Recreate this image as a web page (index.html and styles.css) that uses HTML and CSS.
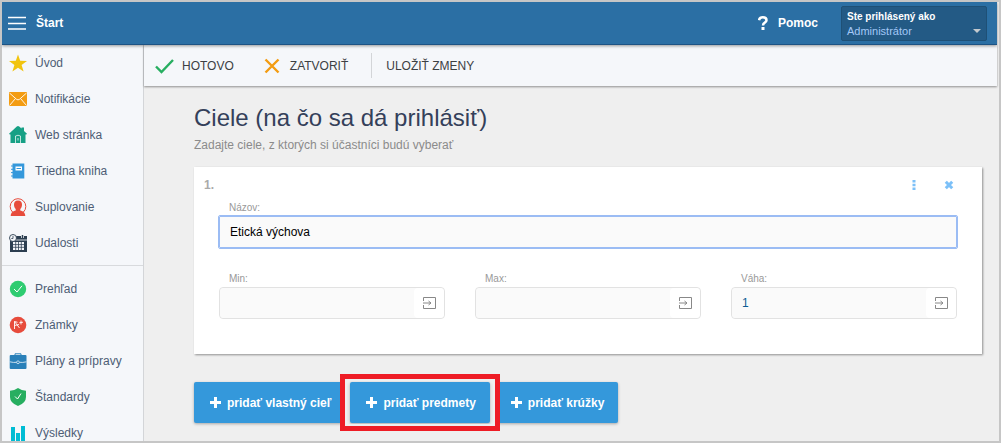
FILE: index.html
```html
<!DOCTYPE html>
<html lang="sk">
  <head>
    <meta charset="utf-8">
    <title>Ciele</title>
    <meta name="viewport" content="width=device-width, initial-scale=1">
    <link rel="stylesheet" href="styles.css">
  </head>
  <body>
    <header class="topbar">
      <button type="button" class="menu-button">
        <svg width="18" height="14" viewBox="0 0 18 14" fill="none" stroke="#fff" stroke-width="1.600"><path d="M0 1.500h18M0 7.500h18M0 13h18"/></svg>
        Štart
      </button>
      <a href="#" class="help">
        <svg width="10" height="14" viewBox="0 0 10 14" fill="none" stroke="#fff" stroke-width="2.500"><path d="M1 4.200C1.300 2.200 2.800 1.300 4.800 1.300c2.200 0 3.700 1.200 3.700 2.900C8.500 6.500 5 6.400 5 9.400"/><path d="M5 11v3" stroke-width="3"/></svg>
        Pomoc
      </a>
      <button type="button" class="user">
        <span class="user-label">Ste prihlásený ako</span>
        <span class="user-name">Administrátor <i class="caret"></i></span>
      </button>
    </header>

    <div class="layout">
      <nav class="sidebar">
        <ul>
          <li><a href="#">
            <svg width="18" height="18" viewBox="0 0 18 18" fill="#f1c40f"><path d="M9 .5l2.200 6.200 6.800.2-5.400 4.200 2 6.400L9 13.700l-5.600 3.800 2-6.400L0 6.900l6.800-.2z"/></svg>
            Úvod</a></li>
          <li><a href="#">
            <svg width="18" height="18" viewBox="0 0 18 18"><path d="M0 2h18v14H0z" fill="#f39c12"/><path d="M.5 3l7 6.300q1.500 1.200 3 0l7-6.300M.5 15.500l5.800-6.800M17.500 15.500l-5.800-6.800" fill="none" stroke="#fff" stroke-width=".9"/></svg>
            Notifikácie</a></li>
          <li><a href="#">
            <svg width="18" height="18" viewBox="0 0 18 18"><path d="M0 7.700L7.800.6q1.200-1 2.400 0L12.500 2.600V1.500H15v3.400l3 2.800-.7.900H16.500V17H1.500V8.600H.8z" fill="#16a085"/><path d="M6.500 17V10q2.500-1.500 5 0v7M9 12v2.500" fill="none" stroke="#e7f5f2" stroke-width=".8"/></svg>
            Web stránka</a></li>
          <li><a href="#">
            <svg width="18" height="18" viewBox="0 0 18 18"><path d="M3.500 1.500h11.800v15H3.500z" fill="#3498db"/><path d="M2 4h2M2 7.300h2M2 10.600h2M2 14h2" stroke="#3498db"/><path d="M6.500 4.500h6.500v4H6.500z" fill="#fff"/><path d="M7.500 6.500h4.500" stroke="#3498db"/></svg>
            Triedna kniha</a></li>
          <li><a href="#">
            <svg width="18" height="18" viewBox="0 0 18 18"><circle cx="9" cy="8.500" r="7.800" fill="none" stroke="#e74c3c"/><path d="M9 2.500c3 0 4 1.800 4 4.300 0 2-.8 3.200-1.700 4.200v1.500c2.200.8 4.700 1.300 5 5.500H1.700c.3-4.200 2.800-4.700 5-5.500V11C5.800 10 5 8.800 5 6.800c0-2.500 1-4.300 4-4.300z" fill="#e74c3c"/></svg>
            Suplovanie</a></li>
          <li><a href="#">
            <svg width="18" height="18" viewBox="0 0 18 18"><path d="M1 2h17v16H1z" fill="#2c3e50"/><path d="M1 6h17" stroke="#f5f7fa" stroke-width=".8"/><path d="M13.500 0v4" stroke="#f5f7fa" stroke-width="3"/><path d="M13.500 1v3" stroke="#2c3e50" stroke-width="1.500"/><path d="M4 8h11v8H4z" fill="#f5f7fa"/><path d="M6.700 8v8M9.500 8v8M12.300 8v8M4 10.600h11M4 13.300h11" stroke="#2c3e50" stroke-width=".8"/><circle cx="4" cy="4" r="3.500" fill="#f5f7fa" stroke="#2c3e50" stroke-width=".9"/><path d="M4 2v2.500H2.300" fill="none" stroke="#2c3e50" stroke-width=".8"/></svg>
            Udalosti</a></li>
        </ul>
        <ul>
          <li><a href="#">
            <svg width="18" height="18" viewBox="0 0 18 18"><circle cx="9" cy="9" r="8.200" fill="#2ecc71"/><path d="M5 9l3 3 5-6.200" fill="none" stroke="#fff"/></svg>
            Prehľad</a></li>
          <li><a href="#">
            <svg width="18" height="18" viewBox="0 0 18 18"><circle cx="9" cy="9" r="8.300" fill="#e74c3c"/><path d="M5.500 13V5.500l5 6.500M5.500 9.500l4.500-1M5.500 5.500l3 .8M12 4.500v4M10.300 6.800l3.700-.6" fill="none" stroke="#fff" stroke-width=".9"/></svg>
            Známky</a></li>
          <li><a href="#">
            <svg width="18" height="18" viewBox="0 0 18 18"><path d="M6 3.500V1.800h6v1.700" fill="none" stroke="#2980b9"/><rect x=".7" y="3" width="16.800" height="14" rx="1" fill="#2980b9"/><path d="M.7 9.800q4 1 7 .5M17.500 9.800q-4 1-7 .5" fill="none" stroke="#d7e8f4" stroke-width=".9"/><circle cx="9" cy="10.300" r="1.400" fill="none" stroke="#d7e8f4" stroke-width=".8"/></svg>
            Plány a prípravy</a></li>
          <li><a href="#">
            <svg width="18" height="18" viewBox="0 0 18 18"><path d="M9 0q3.500 2.500 8 2.700V9q0 6-8 9-8-3-8-9V2.700Q5.500 2.500 9 0z" fill="#27ae60"/><path d="M6 8.500l2.500 2.500L12 5.500" fill="none" stroke="#fff"/></svg>
            Štandardy</a></li>
          <li><a href="#">
            <svg width="18" height="18" viewBox="0 0 18 18" fill="#00bcd4"><path d="M2 3h4v15H2zM7 9h4v9H7zM12 2h4v16h-4z"/></svg>
            Výsledky</a></li>
        </ul>
      </nav>

      <main class="main">
        <div class="toolbar">
          <button type="button">
            <svg width="19" height="16" viewBox="0 0 19 16" fill="none" stroke="#27ae60" stroke-width="2.400"><path d="M1 8.500l5.500 5.500L18 2"/></svg>
            HOTOVO
          </button>
          <button type="button">
            <svg width="18" height="16" viewBox="0 0 18 16" fill="none" stroke="#f39c12" stroke-width="2.400"><path d="M1.500 1.500l13 13M14.500 1.500l-13 13"/></svg>
            ZATVORIŤ
          </button>
          <button type="button" class="save">ULOŽIŤ ZMENY</button>
        </div>

        <div class="content">
          <h1>Ciele (na čo sa dá prihlásiť)</h1>
          <p class="subtitle">Zadajte ciele, z ktorých si účastníci budú vyberať</p>

          <section class="card">
            <div class="card-head">
              <span class="number">1.</span>
              <button type="button" aria-label="Možnosti">
                <svg width="10" height="10" viewBox="0 0 10 10" fill="#7cc0f8"><path d="M3.500 0h3v2.600h-3zM3.500 3.700h3v2.600h-3zM3.500 7.400h3V10h-3z"/></svg>
              </button>
              <button type="button" aria-label="Odstrániť">
                <svg width="10" height="10" viewBox="0 0 10 10" fill="none" stroke="#7cc0f8" stroke-width="3"><path d="M1.800 1.800l6.400 6.400M8.200 1.800L1.800 8.200"/></svg>
              </button>
            </div>
            <div class="fields">
              <div class="field wide">
                <label for="name">Názov:</label>
                <input type="text" id="name" class="focused" value="Etická výchova">
              </div>
              <div class="field">
                <label for="min">Min:</label>
                <div class="input-group">
                  <input type="text" id="min">
                  <button type="button" aria-label="Nastaviť min"><svg width="15" height="12" viewBox="0 0 15 12" fill="none" stroke="#888"><path d="M1.500 4V.5h12v11h-12V8M1 6h8M6.500 4l2.500 2-2.500 2"/></svg></button>
                </div>
              </div>
              <div class="field">
                <label for="max">Max:</label>
                <div class="input-group">
                  <input type="text" id="max">
                  <button type="button" aria-label="Nastaviť max"><svg width="15" height="12" viewBox="0 0 15 12" fill="none" stroke="#888"><path d="M1.500 4V.5h12v11h-12V8M1 6h8M6.500 4l2.500 2-2.500 2"/></svg></button>
                </div>
              </div>
              <div class="field">
                <label for="weight">Váha:</label>
                <div class="input-group">
                  <input type="text" id="weight" value="1">
                  <button type="button" aria-label="Nastaviť váhu"><svg width="15" height="12" viewBox="0 0 15 12" fill="none" stroke="#888"><path d="M1.500 4V.5h12v11h-12V8M1 6h8M6.500 4l2.500 2-2.500 2"/></svg></button>
                </div>
              </div>
            </div>
          </section>

          <div class="actions">
            <button type="button">
              <svg width="11" height="11" viewBox="0 0 11 11" stroke="#fff" stroke-width="3"><path d="M5.500 0v11M0 5.500h11"/></svg>
              pridať vlastný cieľ
            </button>
            <button type="button" class="marked">
              <svg width="11" height="11" viewBox="0 0 11 11" stroke="#fff" stroke-width="3"><path d="M5.500 0v11M0 5.500h11"/></svg>
              pridať predmety
            </button>
            <button type="button">
              <svg width="11" height="11" viewBox="0 0 11 11" stroke="#fff" stroke-width="3"><path d="M5.500 0v11M0 5.500h11"/></svg>
              pridať krúžky
            </button>
          </div>
        </div>
      </main>
    </div>
  </body>
</html>
```
FILE: styles.css
```css
* {
  box-sizing: border-box;
}

body {
  display: flex;
  flex-direction: column;
  height: 100vh;
  margin: 0;
  border: 2px solid #c6c6c6;
  padding-right: 2px;
  overflow: hidden;
  background: #efefef;
  color: #34495e;
  font-family: Arial, "Liberation Sans", sans-serif;
  font-size: 12px;
  line-height: 16px;
}

button {
  border: 0;
  padding: 0;
  background: none;
  color: inherit;
  font: inherit;
  cursor: pointer;
}

a {
  color: inherit;
  text-decoration: none;
}

svg {
  display: block;
  flex: none;
}

.topbar {
  display: flex;
  align-items: center;
  flex: none;
  height: 43px;
  padding: 0 10px 0 6px;
  border-bottom: 1px solid #1d5384;
  background: #2b6fa4;
  box-shadow: 0 1px 3px rgba(0,0,0,.4);
  color: #fff;
  font-weight: bold;
  z-index: 2;
}

.menu-button,
.help {
  display: flex;
  align-items: center;
  gap: 10px;
}

.help {
  margin-left: auto;
  margin-right: 23px;
}

.user {
  display: flex;
  flex-direction: column;
  width: 146px;
  height: 35px;
  padding: 3px 5px;
  border: 1px solid #1e5076;
  border-radius: 2px;
  background: #235a85;
  text-align: left;
}

.user-label {
  font-size: 10px;
  line-height: 13px;
  font-weight: bold;
}

.user-name {
  display: flex;
  justify-content: space-between;
  align-items: center;
  width: 100%;
  color: #a3c8f7;
  font-size: 11px;
  font-weight: normal;
}

.caret {
  border: 4px solid transparent;
  border-top-color: #c3c9ce;
  border-bottom: 0;
}

.layout {
  display: flex;
  flex: 1;
  min-height: 0;
}

.sidebar {
  flex: none;
  width: 142px;
  border-right: 1px solid #d3d5d8;
  overflow: hidden;
  background: #f5f7fa;
  color: #4d5d75;
}

.sidebar ul {
  margin: 0;
  padding: 0 0 4px;
  list-style: none;
}

.sidebar ul + ul {
  padding-top: 5px;
  border-top: 1px solid #d8dadd;
}

.sidebar a {
  display: flex;
  align-items: center;
  gap: 8px;
  height: 36px;
  padding-left: 7px;
}

.main {
  flex: 1;
  min-width: 0;
}

.toolbar {
  display: flex;
  align-items: center;
  gap: 30px;
  height: 41px;
  padding-left: 11px;
  background: #f5f7fa;
  box-shadow: 0 1px 2px rgba(0,0,0,.4);
  color: #3c4043;
}

.toolbar button {
  display: flex;
  align-items: center;
  gap: 8px;
}

.toolbar .save {
  height: 25px;
  margin-left: -7px;
  padding-left: 14px;
  border-left: 1px solid #d3d5d8;
}

.content {
  padding: 16px 15px 20px 50px;
}

h1 {
  margin: 0;
  color: #34405a;
  font-size: 24px;
  line-height: 32px;
  font-weight: normal;
}

.subtitle {
  margin: 3px 0 14px;
  color: #8b8b8b;
}

.card {
  padding: 9px 25px 35px;
  background: #fff;
  box-shadow: 1px 1px 2px rgba(0,0,0,.4);
}

.card-head {
  display: flex;
  align-items: center;
  gap: 25px;
  height: 18px;
  margin: 0 3px 8px -15px;
}

.number {
  flex: 1;
  color: #aaa;
  font-weight: bold;
}

.fields {
  display: grid;
  grid-template-columns: repeat(3, 1fr);
  gap: 25px 30px;
}

.wide {
  grid-column: 1 / -1;
}

label {
  display: block;
  margin: 0 10px 2px;
  color: #999;
  font-size: 10px;
  line-height: 12px;
}

input {
  display: block;
  width: 100%;
  height: 32px;
  padding: 0 10px;
  border: 1px solid #e2e2e2;
  border-radius: 4px;
  background: #fafafa;
  color: #000;
  font: inherit;
}

.focused {
  border-color: #9bbcf4;
  border-radius: 1px;
  outline: 1px solid #9bbcf4;
}

.input-group {
  display: flex;
  border: 1px solid #e2e2e2;
  border-radius: 4px;
  background: #fafafa;
}

.input-group input {
  flex: 1;
  min-width: 0;
  height: 30px;
  border: 0;
  color: #0d5c94;
}

.input-group button {
  width: 30px;
  padding-left: 8px;
  border-radius: 4px;
  background: #fff;
}

.actions {
  display: flex;
  gap: 5px;
  margin-top: 28px;
}

.actions button {
  position: relative;
  display: flex;
  align-items: center;
  gap: 6px;
  height: 41px;
  padding: 0 14px 0 16px;
  border-radius: 2px;
  background: #3498db;
  box-shadow: 0 1px 3px rgba(0,0,0,.3);
  color: #fff;
  font-weight: bold;
}

/* red frame round the highlighted action */
.actions .marked {
  z-index: 1;
}

.marked::after {
  content: "";
  position: absolute;
  inset: -8px -10px;
  border: 5px solid #ee1c25;
  box-shadow: inset 0 0 0 2px #efefef;
}
```
